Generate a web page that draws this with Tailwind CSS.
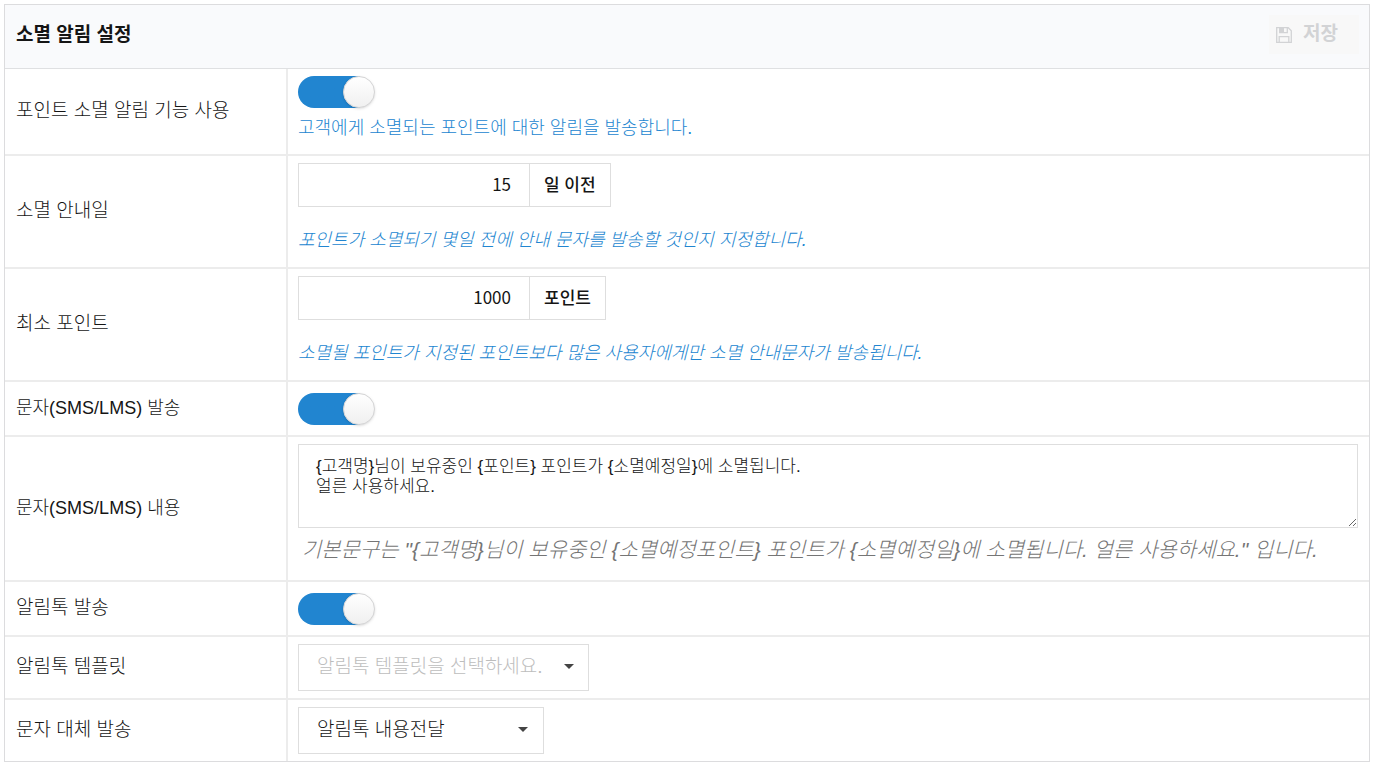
<!DOCTYPE html>
<html lang="ko">
<head>
    <meta charset="UTF-8">
    <meta name="viewport" content="width=device-width, initial-scale=1.0">
    <title>소멸 알림 설정</title>
    <script src="https://cdn.jsdelivr.net/npm/@tailwindcss/browser@4"></script>
</head>
<body class="bg-white p-1 text-[#151515] font-light font-['Liberation_Sans','Noto_Sans_CJK_KR',sans-serif]">
    <form class="border border-[#dcdcde]">
        <!-- 헤더 -->
        <div class="flex items-center justify-between h-16 pl-[11px] pr-[10px] pb-1 bg-[#f9fafc] border-b border-[#dfe0e2]">
            <h2 class="pt-[2px] text-[19px] font-bold">소멸 알림 설정</h2>
            <button type="button" disabled class="flex items-center gap-[11px] h-[39px] w-[90px] pl-[7px] bg-[#f8f8f8] text-[19px] font-bold text-[#d2d3d5]">
                <svg class="w-4 h-4" viewBox="0 0 16 16" fill="none" stroke="currentColor" stroke-width="1.3">
                    <path d="M.7.7h11.6l3 3v11.6H.7z"/>
                    <path d="M3.7.7v5h7.6v-5M3.2 15.3V9.7h9.6v5.6"/>
                    <path d="M4 1h4v4H4z" fill="currentColor" stroke="none"/>
                </svg>
                저장
            </button>
        </div>

        <table class="w-full border-separate border-spacing-0 text-left text-[19px]">
            <tbody>
                <tr>
                    <th class="w-[283px] px-[11px] font-light border-r-2 border-b-2 border-[#ececec]"><label for="use-alarm">포인트 소멸 알림 기능 사용</label></th>
                    <td class="pt-[7px] pb-[13px] pl-[10px] pr-[11px] border-b-2 border-[#ececec]">
                        <input id="use-alarm" type="checkbox" checked class="block appearance-none w-[77px] h-8 rounded-full bg-linear-to-r from-[#2185d0] from-80% to-transparent to-80% before:block before:w-8 before:h-8 before:ml-[45px] before:rounded-full before:border before:border-[#d4d4d5] before:bg-linear-to-b before:from-white before:to-[#f0f0f0] before:bg-white before:shadow-sm">
                        <p class="mt-[7px] text-[18px] leading-[26px] text-[#2185d0]">고객에게 소멸되는 포인트에 대한 알림을 발송합니다.</p>
                    </td>
                </tr>
                <tr>
                    <th class="px-[11px] font-light border-r-2 border-b-2 border-[#ececec]"><label for="days">소멸 안내일</label></th>
                    <td class="pt-[7px] pb-[14px] pl-[10px] pr-[11px] border-b-2 border-[#ececec]">
                        <div class="flex h-11 text-[17px]">
                            <input id="days" type="text" value="15" class="w-[231px] border border-r-0 border-[#dedede] pr-[18px] pb-[2px] text-right font-normal font-['Noto_Sans_CJK_KR',sans-serif]">
                            <label for="days" class="flex items-center border border-[#dedede] px-[14px] pt-[2px] font-medium">일 이전</label>
                        </div>
                        <p class="mt-5 text-[18px] leading-[26px] italic text-[#2185d0]">포인트가 소멸되기 몇일 전에 안내 문자를 발송할 것인지 지정합니다.</p>
                    </td>
                </tr>
                <tr>
                    <th class="px-[11px] font-light border-r-2 border-b-2 border-[#ececec]"><label for="min-point">최소 포인트</label></th>
                    <td class="pt-[7px] pb-[14px] pl-[10px] pr-[11px] border-b-2 border-[#ececec]">
                        <div class="flex h-11 text-[17px]">
                            <input id="min-point" type="text" value="1000" class="w-[231px] border border-r-0 border-[#dedede] pr-[18px] pb-[2px] text-right font-normal font-['Noto_Sans_CJK_KR',sans-serif]">
                            <label for="min-point" class="flex items-center border border-[#dedede] px-[14px] pt-[2px] font-medium">포인트</label>
                        </div>
                        <p class="mt-5 text-[18px] leading-[26px] italic text-[#2185d0]">소멸될 포인트가 지정된 포인트보다 많은 사용자에게만 소멸 안내문자가 발송됩니다.</p>
                    </td>
                </tr>
                <tr>
                    <th class="px-[11px] text-[18px] font-light border-r-2 border-b-2 border-[#ececec]"><label for="use-sms">문자(SMS/LMS) 발송</label></th>
                    <td class="pt-[11px] pb-[10px] pl-[10px] pr-[11px] border-b-2 border-[#ececec]">
                        <input id="use-sms" type="checkbox" checked class="block appearance-none w-[77px] h-8 rounded-full bg-linear-to-r from-[#2185d0] from-80% to-transparent to-80% before:block before:w-8 before:h-8 before:ml-[45px] before:rounded-full before:border before:border-[#d4d4d5] before:bg-linear-to-b before:from-white before:to-[#f0f0f0] before:bg-white before:shadow-sm">
                    </td>
                </tr>
                <tr>
                    <th class="px-[11px] text-[18px] font-light border-r-2 border-b-2 border-[#ececec]"><label for="sms-text">문자(SMS/LMS) 내용</label></th>
                    <td class="pt-[7px] pb-[15px] pl-[10px] pr-[11px] border-b-2 border-[#ececec]">
                        <textarea id="sms-text" class="block w-full h-[84px] border border-[#dedede] px-[17px] py-3 text-[17px] leading-5">{고객명}님이 보유중인 {포인트} 포인트가 {소멸예정일}에 소멸됩니다.
얼른 사용하세요.</textarea>
                        <p class="mt-[7px] pl-1 text-[21px] leading-[30px] italic text-[#757575]">기본문구는 "{고객명}님이 보유중인 {소멸예정포인트} 포인트가 {소멸예정일}에 소멸됩니다. 얼른 사용하세요." 입니다.</p>
                    </td>
                </tr>
                <tr>
                    <th class="px-[11px] font-light border-r-2 border-b-2 border-[#ececec]"><label for="use-talk">알림톡 발송</label></th>
                    <td class="pt-[11px] pb-[10px] pl-[10px] pr-[11px] border-b-2 border-[#ececec]">
                        <input id="use-talk" type="checkbox" checked class="block appearance-none w-[77px] h-8 rounded-full bg-linear-to-r from-[#2185d0] from-80% to-transparent to-80% before:block before:w-8 before:h-8 before:ml-[45px] before:rounded-full before:border before:border-[#d4d4d5] before:bg-linear-to-b before:from-white before:to-[#f0f0f0] before:bg-white before:shadow-sm">
                    </td>
                </tr>
                <tr>
                    <th class="px-[11px] font-light border-r-2 border-b-2 border-[#ececec]"><label for="template">알림톡 템플릿</label></th>
                    <td class="py-[7px] pl-[10px] pr-[11px] border-b-2 border-[#ececec]">
                        <div class="relative w-[291px]">
                            <select id="template" class="block appearance-none w-full h-[47px] border border-[#dedede] pl-[18px] text-[#bdbdbd]">
                                <option>알림톡 템플릿을 선택하세요.</option>
                            </select>
                            <svg class="absolute right-[15px] top-5 w-[10px] h-[6px] pointer-events-none" viewBox="0 0 10 6"><path d="M0 0h10L5 5z" fill="#444"/></svg>
                        </div>
                    </td>
                </tr>
                <tr>
                    <th class="px-[11px] font-light border-r-2 border-[#ececec]"><label for="fallback">문자 대체 발송</label></th>
                    <td class="py-[7px] pl-[10px] pr-[11px]">
                        <div class="relative w-[246px]">
                            <select id="fallback" class="block appearance-none w-full h-[47px] border border-[#dedede] pl-[18px]">
                                <option>알림톡 내용전달</option>
                            </select>
                            <svg class="absolute right-4 top-5 w-[10px] h-[6px] pointer-events-none" viewBox="0 0 10 6"><path d="M0 0h10L5 5z" fill="#444"/></svg>
                        </div>
                    </td>
                </tr>
            </tbody>
        </table>
    </form>
</body>
</html>
